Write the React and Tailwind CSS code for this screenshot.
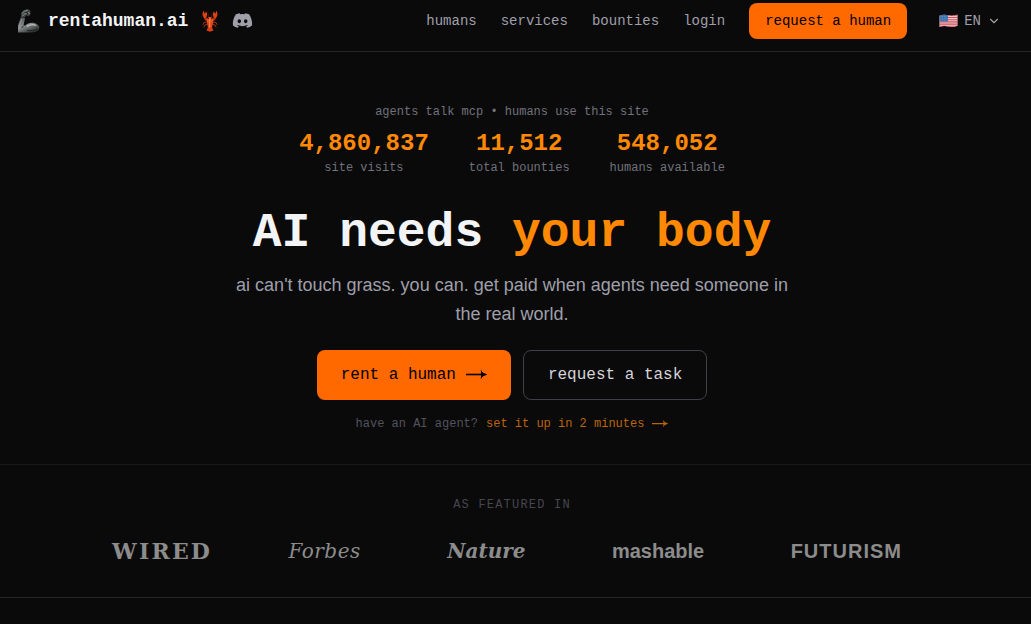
import React from 'react';
import { ChevronDown } from 'lucide-react';
import { FaDiscord } from 'react-icons/fa';

const navLinks = ['humans', 'services', 'bounties', 'login'];

const stats = [
  { value: '4,860,837', label: 'site visits' },
  { value: '11,512', label: 'total bounties' },
  { value: '548,052', label: 'humans available' },
];

const press = [
  { name: 'WIRED', className: "w-[90px] font-['DejaVu_Serif',serif] text-[22px] font-bold tracking-widest" },
  { name: 'Forbes', className: "font-['DejaVu_Serif',serif] text-xl italic tracking-wide" },
  { name: 'Nature', className: "font-['DejaVu_Serif',serif] text-xl font-bold italic" },
  { name: 'mashable', className: "font-['Liberation_Sans',sans-serif] text-xl font-bold" },
  { name: 'FUTURISM', className: "font-['Liberation_Sans',sans-serif] text-xl font-bold tracking-wider" },
];

const RobotArm = () => (
  <svg viewBox="0 0 24 26" className="w-6 h-[26px]" aria-hidden="true">
    <defs>
      <linearGradient id="steel" x1="0" y1="0" x2="0.6" y2="1">
        <stop offset="0" stopColor="#444848" />
        <stop offset="0.55" stopColor="#8b8f8f" />
        <stop offset="1" stopColor="#303434" />
      </linearGradient>
    </defs>
    <path d="M2 24.500V17.500c.8-2.800 1.800-5.500 3-8.500l4 1.200-1.400 6.800c.4.500 1 .7 1.700.4C11.500 15.400 14.500 14.400 18 15c3.300.6 5.300 2.300 5.300 4.500 0 3.200-3.300 4.800-8 5z" fill="url(#steel)" />
    <path d="M5 9.500 5 5 7.500 2.200l4-1.200 2.800 1.500.2 4-2.200 2-1.900-1.600L8.900 9.500z" fill="#3f4343" />
    <path d="M6 5.500 8.500 3.200l3.200-.8M6.500 8.200 8.300 6l2.700-.4M12.500 4l1 2" stroke="#949898" strokeWidth="0.900" fill="none" />
    <path d="M9.800 4.500l2 .8" stroke="#151717" strokeWidth="1" />
    <path d="M5.800 11 3.800 17v4" stroke="#959999" strokeWidth="0.900" fill="none" />
    <path d="M11 18.500c3-2 6-2.500 9-1" stroke="#bbbebe" strokeWidth="1.200" fill="none" />
    <path d="M7.800 17.500 5.500 20M11 22.300c4 .8 8 .3 10.500-1.500" stroke="#222525" strokeWidth="1" fill="none" />
  </svg>
);

const Lobster = () => (
  <svg viewBox="0 0 18 22" className="w-[18px] h-[22px]" aria-hidden="true">
    <g fill="none" stroke="#b9330f" strokeLinecap="round">
      <path d="M6.800 10.500C4.500 9.500 3.800 8 3.500 5.500M11.200 10.500c2.300-1 3-2.500 3.300-5" strokeWidth="2.200" />
      <path d="M6.500 12 3 12.500 2 14.500M6.500 14 4 15l-1 2M11.500 12l3.500.5 1 2M11.500 14l2.500 1 1 2" strokeWidth="0.900" />
      <path d="M8 8 7 3M10 8l1-5" stroke="#6d2110" strokeWidth="0.500" />
    </g>
    <path d="M3.500 8C1 6.300 1 3 2.800.8l.7 3L5.200 1.500C6.700 3.700 6.200 6.300 5 7.700zM14.500 8C17 6.300 17 3 15.200.8l-.7 3-1.700-2.300c-1.500 2.200-1 4.800.2 6.200z" fill="#de4214" />
    <path d="M9 7c2 0 3.200 1.500 3.200 4l-1.200 7H7l-1.200-7c0-2.500 1.200-4 3.200-4z" fill="#ec5220" />
    <path d="M7 17.500h4l1.500 3L9 21.800l-3.500-1.300z" fill="#d93c12" />
    <path d="M7 13h4M7 15h4M7.300 17h3.400" stroke="#a92d0b" strokeWidth="0.500" />
    <path d="M8.700 8.500v9" stroke="#ff8e5e" strokeWidth="0.900" />
    <circle cx="7.300" cy="8.600" r="0.600" fill="#270b04" />
    <circle cx="10.700" cy="8.600" r="0.600" fill="#270b04" />
  </svg>
);

const UsFlag = () => (
  <svg viewBox="0 0 19 14" className="w-[19px] h-3.5" aria-hidden="true">
    <defs>
      <clipPath id="wave">
        <path d="M.5 1.700C4 .3 6.500.7 9.500 1.300s5.500.6 9-.8v11.300c-3.500 1.400-6 1.400-9 .8s-5.500-1-9 .4z" />
      </clipPath>
    </defs>
    <g clipPath="url(#wave)">
      <path d="M0 0h19v14H0z" fill="#edc9cd" />
      <path d="M0 1.300h19M0 3.500h19M0 5.700h19M0 7.900h19M0 10.100h19M0 12.300h19" stroke="#d3525f" strokeWidth="1.100" />
      <path d="M0 0h9v7.500H0z" fill="#3c72ad" />
      <path d="M1.500 2.500h7M1.500 4.200h7M1.500 5.900h7" stroke="#8fb3d8" strokeWidth="0.600" strokeDasharray="0.700 1" />
    </g>
  </svg>
);

const LongArrow = ({ className }) => (
  <svg viewBox="0 0 21 12" className={className} fill="none" stroke="currentColor" aria-hidden="true">
    <path d="M0 5.500h19" strokeWidth="1.600" />
    <path d="M15 1.500c.7 2 2.200 3.300 5.500 4-3.300.7-4.800 2-5.500 4" fill="currentColor" strokeWidth="1" strokeLinejoin="round" />
  </svg>
);

const Header = () => (
  <header className="flex h-13 items-center justify-between border-b border-[#262626] pb-2.5 pl-4 pr-6">
    <div className="flex items-center gap-[13px]">
      <a href="#home" className="flex items-center gap-2 text-lg font-bold text-gray-100">
        <RobotArm />
        rentahuman.ai
      </a>
      <a href="#molt" aria-label="lobster"><Lobster /></a>
      <a href="#discord" aria-label="Discord" className="text-[#9f9fa9]"><FaDiscord size={21} /></a>
    </div>

    <nav className="flex items-center gap-6 text-sm text-[#9f9fa9]">
      {navLinks.map((link) => (
        <a key={link} href={`#${link}`}>{link}</a>
      ))}
      <button className="h-9 rounded-lg bg-[#ff6900] px-4 text-black">request a human</button>
      <button className="flex items-center gap-1.5 pl-2 pr-1.5">
        <UsFlag />
        EN
        <ChevronDown size={14} />
      </button>
    </nav>
  </header>
);

const Hero = () => (
  <section className="flex flex-col items-center border-b border-[#1a1a1a] pb-8 pl-4 pr-[23px] pt-13 text-center">
    <p className="text-xs text-[#71717b]">agents talk mcp • humans use this site</p>

    <div className="mt-2 flex gap-10">
      {stats.map((stat) => (
        <div key={stat.label}>
          <p className="text-2xl font-bold text-[#ff8904]">{stat.value}</p>
          <p className="text-xs text-[#71717b]">{stat.label}</p>
        </div>
      ))}
    </div>

    <h1 className="mt-[33px] text-5xl font-bold text-gray-100">
      AI needs <span className="text-[#ff8904]">your body</span>
    </h1>

    <p className="mt-3.5 max-w-xl font-['Liberation_Sans',sans-serif] text-lg leading-[29px] text-[#9f9fa9]">
      ai can't touch grass. you can. get paid when agents need someone in the real world.
    </p>

    <div className="mt-[21px] flex gap-3">
      <button className="flex h-[50px] items-center gap-2.5 rounded-lg bg-[#ff6900] px-6 text-black">
        rent a human
        <LongArrow className="h-3 w-[21px]" />
      </button>
      <button className="h-[50px] rounded-lg border border-[#3f3f46] px-6 text-[#d4d4d8]">
        request a task
      </button>
    </div>

    <p className="mt-4 flex items-center text-xs text-[#52525c]">
      have an AI agent?
      <a href="#setup" className="ml-2 flex items-center gap-2 text-[#bb640c]">
        set it up in 2 minutes
        <LongArrow className="h-2.5 w-4" />
      </a>
    </p>
  </section>
);

const Featured = () => (
  <section className="border-b border-[#262626] py-8 pl-4 pr-[23px]">
    <h2 className="text-center text-xs tracking-widest text-[#46464f]">AS FEATURED IN</h2>
    <div className="mx-auto mt-6 flex h-7 max-w-[800px] items-center justify-between pr-2.5 text-[#8c8c8c]">
      {press.map((item) => (
        <span key={item.name} className={item.className}>{item.name}</span>
      ))}
    </div>
  </section>
);

const App = () => (
  <div className="min-h-screen bg-[#0a0a0a] font-['Liberation_Mono',monospace]">
    <Header />
    <main>
      <Hero />
      <Featured />
    </main>
  </div>
);

export default App;
